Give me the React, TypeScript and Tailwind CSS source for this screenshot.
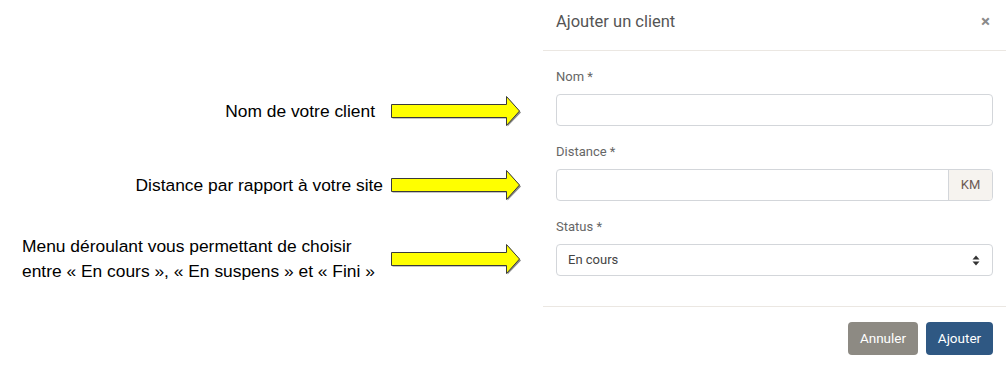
import React from "react";

function Arrow() {
  return (
    <svg width="132" height="32" viewBox="0 0 132 32" className="block shrink-0">
      <polygon
        points="1.5,10.5 116.5,10.5 116.5,2.5 130,17.5 116.5,31.5 116.5,23.5 1.5,23.5"
        fill="#8a8a8a"
      />
      <polygon
        points="0.5,9.5 115.5,9.5 115.5,1.5 128.5,16 115.5,30.5 115.5,22.5 0.5,22.5"
        fill="#ffff00"
        stroke="#3a3a3a"
        strokeWidth="1"
      />
    </svg>
  );
}

function Field({ label, children }: { label: string; children: React.ReactNode }) {
  return (
    <div className="flex flex-col">
      <label className="h-[20px] leading-[20px] text-[13px] text-[#666] mb-[7px]">{label}</label>
      {children}
    </div>
  );
}

export default function App() {
  return (
    <div
      className="w-[1007px] h-[372px] bg-white flex overflow-hidden"
      style={{ fontFamily: "Roboto, 'Noto Sans', sans-serif" }}
    >
      {/* Annotations */}
      <div
        className="w-[543px] shrink-0 flex flex-col pt-[74px] text-[17.4px] text-black"
        style={{ fontFamily: "'Liberation Sans', Arial, sans-serif" }}
      >
        <div className="h-[74px] flex items-center">
          <div className="w-[391px] text-right pr-[16px] leading-[22px]">Nom de votre client</div>
          <Arrow />
        </div>
        <div className="h-[74px] flex items-center">
          <div className="w-[391px] text-right pr-[8px] leading-[22px]">Distance par rapport à votre site</div>
          <Arrow />
        </div>
        <div className="h-[74px] flex items-center">
          <div className="w-[391px] pl-[22px] leading-[25px] whitespace-nowrap">
            Menu déroulant vous permettant de choisir
            <br />
            entre « En cours », « En suspens » et « Fini »
          </div>
          <Arrow />
        </div>
      </div>

      {/* Modal */}
      <div className="w-[463px] shrink-0 flex flex-col bg-white">
        <div className="h-[51px] flex items-start justify-between border-b border-[#ebe7e2] px-[13px] pt-[11px] pr-[14px]">
          <div className="text-[16.5px] leading-[22px] text-[#555]">Ajouter un client</div>
          <div className="text-[17px] leading-[20px] font-bold text-[#8a8a8a] mr-[2px]">×</div>
        </div>
        <div className="flex flex-col gap-[16px] pl-[13px] pr-[13px] pt-[16px] pb-[30px] border-b border-[#ebe7e2]">
          <Field label="Nom *">
            <div className="h-[32px] border border-[#d3d6da] rounded-[4px] bg-white" />
          </Field>
          <Field label="Distance *">
            <div className="h-[32px] border border-[#d3d6da] rounded-[4px] bg-white flex overflow-hidden">
              <div className="flex-1" />
              <div className="w-[44px] border-l border-[#d3d6da] bg-[#f6f3ef] flex items-center justify-center text-[13px] text-[#6d5a54]">
                KM
              </div>
            </div>
          </Field>
          <Field label="Status *">
            <div className="h-[32px] border border-[#d3d6da] rounded-[4px] bg-white flex items-center justify-between pl-[11px] pr-[12px]">
              <span className="text-[13px] text-[#444]">En cours</span>
              <svg width="8" height="11" viewBox="0 0 8 11">
                <polygon points="4,0.5 7.5,4.5 0.5,4.5" fill="#333" />
                <polygon points="0.5,6.5 7.5,6.5 4,10.5" fill="#333" />
              </svg>
            </div>
          </Field>
        </div>
        <div className="flex justify-end gap-[8px] pt-[15px] pr-[13px]">
          <button className="w-[70px] h-[33px] rounded-[4px] bg-[#8d8a83] text-white text-[13.5px]">Annuler</button>
          <button className="w-[67px] h-[33px] rounded-[4px] bg-[#2f5883] text-white text-[13.5px]">Ajouter</button>
        </div>
      </div>
    </div>
  );
}
